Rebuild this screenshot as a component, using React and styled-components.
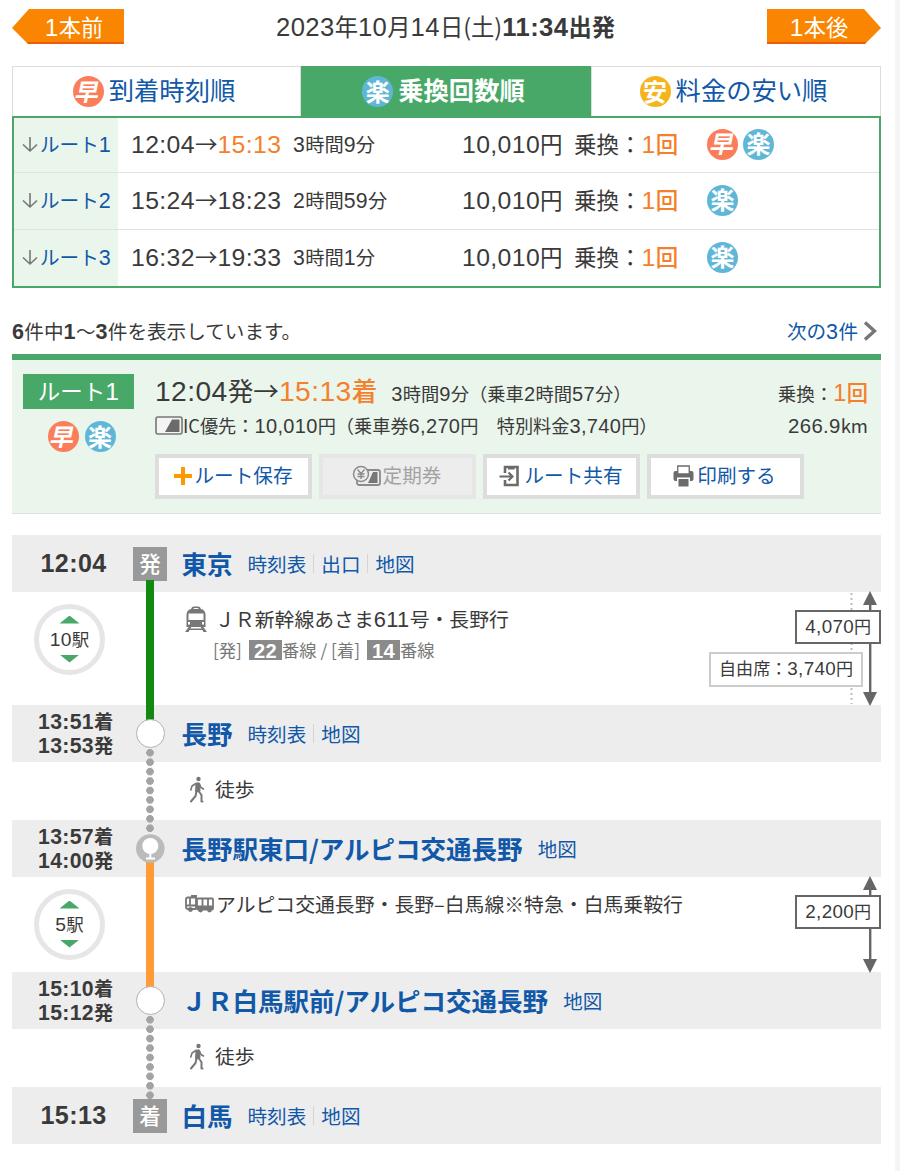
import styled, { createGlobalStyle, css } from 'styled-components'

const GlobalStyle = createGlobalStyle`
    * { box-sizing: border-box; }
    body {
        margin: 0;
        background: #fff;
        color: #3a3a3a;
        font-family: "Noto Sans CJK JP", sans-serif;
        font-size: 19.6px;
        line-height: 1;
    }
    a { color: #1158a8; text-decoration: none; }
`

const Page = styled.div`
    width: 900px;
    height: 1171px;
    padding: 9px 14px 0 12px;
    border-right: 5px solid #f5f5f5;
    overflow: hidden;
`

const Digits = styled.span`
    font-family: "Liberation Sans", sans-serif;
    font-size: 1.1em;
    line-height: 0;
    letter-spacing: 0.016em;
`

// digits are set in a wider latin face than the kanji around them
const Txt = ({ children }) =>
    children.split(/([0-9:,.]+)/).map((part, i) => (i % 2 ? <Digits key={i}>{part}</Digits> : part))

/* ---------- header ---------- */

const Header = styled.header`
    display: flex;
    justify-content: space-between;
    width: 869px;
    height: 57px;
`

const StepButton = styled.a`
    display: flex;
    align-items: center;
    justify-content: center;
    width: ${props => (props.$dir === 'prev' ? 112 : 114)}px;
    height: 35px;
    padding-bottom: 1px;
    color: #fff;
    font-size: 22.2px;
    background: linear-gradient(#f98500 33.5px, #ee5a10 33.5px);
    ${props => props.$dir === 'prev' ? css`
        padding-left: 12px;
        clip-path: polygon(0 19px, 17px 0, 100% 0, 100% 100%, 16px 100%);
    ` : css`
        padding-right: 10px;
        clip-path: polygon(0 0, 97px 0, 100% 19px, 98px 100%, 0 100%);
    `}
`

const HeaderDate = styled.div`
    padding-top: 4px;
    font-size: 23.3px;
    line-height: 26px;
    white-space: nowrap;
`

/* ---------- tabs + route list ---------- */

const Badge = styled.span`
    display: inline-flex;
    align-items: center;
    justify-content: center;
    flex: none;
    width: 31px;
    height: 31px;
    border-radius: 50%;
    color: #fff;
    font-size: 24px;
    font-weight: 700;
    background: ${props => props.$color};

    span {
        margin-top: -2px;
        transform: ${props => (props.$slant ? 'skewX(-12deg)' : 'none')};
    }
`

const badgeKinds = {
    fast: { text: '早', color: '#fb7e5b', slant: true },
    easy: { text: '楽', color: '#5fb7d8' },
    cheap: { text: '安', color: '#f4b41d' },
}

const KindBadge = ({ kind }) => {
    const { text, color, slant } = badgeKinds[kind]
    return <Badge $color={color} $slant={slant}><span>{text}</span></Badge>
}

const Tabs = styled.nav`
    display: grid;
    grid-template-columns: 289px 290px 290px;
    width: 869px;
    height: 50px;
`

const Tab = styled.a`
    display: flex;
    align-items: center;
    justify-content: center;
    gap: 5px;
    padding-right: 5px;
    font-size: 25.3px;
    border: 1px solid #ddd;
    border-bottom: 0;
    ${props => props.$active && css`
        color: #fff;
        font-weight: 700;
        background: #48a868;
        border-color: #48a868;
    `}
`

const TabText = styled.span`
    padding-bottom: 3px;
`

const RouteList = styled.div`
    width: 869px;
    height: 172px;
    border: 2px solid #4aa76a;
`

const RouteRow = styled.div`
    display: grid;
    grid-template-columns: 104px 13px 162px 169px 112px 133px auto;
    align-items: center;
    height: ${props => (props.$first ? 54 : 57)}px;
    border-top: ${props => (props.$first ? 0 : 1)}px solid #e2e2e2;
    font-size: 22.5px;
    white-space: nowrap;

    & > :first-child { grid-column: 1; }
    & > :nth-child(2) { grid-column: 3; }
    & > :last-child { padding-bottom: 2px; }
`

const RowText = styled.span`
    padding-bottom: 3px;
`

const RouteLink = styled.a`
    display: flex;
    align-items: center;
    align-self: stretch;
    gap: 1px;
    padding: 0 0 2px 7px;
    font-size: 19.6px;
    background: #eaf5ec;
`

const Hot = styled.span`
    color: #f5802b;
    font-weight: ${props => props.$weight || 400};
    font-size: ${props => props.$size || 1}em;
`

const Duration = styled.span`
    font-size: 19.3px;
`

const DetailDuration = styled.span`
    margin-left: 14px;
    font-size: 18.27px;
`

const Badges = styled.div`
    display: flex;
    gap: ${props => props.$gap || 5}px;
`

const ArrowDown = () => (
    <svg width="18" height="18" viewBox="0 0 18 18" fill="none" stroke="#777" strokeWidth="1.6">
        <path d="M9 2V16M2 9.5L9 16L16 9.5" />
    </svg>
)

const routes = [
    { no: 1, dep: '12:04', arr: '15:13', hot: true, time: '3時間9分', kinds: ['fast', 'easy'] },
    { no: 2, dep: '15:24', arr: '18:23', time: '2時間59分', kinds: ['easy'] },
    { no: 3, dep: '16:32', arr: '19:33', time: '3時間1分', kinds: ['easy'] },
]

/* ---------- paging ---------- */

const Paging = styled.div`
    display: flex;
    align-items: center;
    justify-content: space-between;
    width: 869px;
    height: 66px;
    padding: 20px 4px 0 0;
    font-size: 19.6px;
`

const NextLink = styled.a`
    display: flex;
    align-items: center;
    gap: 4px;
`

/* ---------- route detail ---------- */

const Detail = styled.section`
    display: grid;
    grid-template-columns: 143px 1fr;
    width: 869px;
    height: 160px;
    background: #eaf5ec;
    border-top: 6px solid #4aa76a;
    border-bottom: 1px solid #dbe3dc;
`

const DetailSide = styled.div`
    display: flex;
    flex-direction: column;
    align-items: center;
    gap: 12px;
    width: 133px;
    padding-top: 14px;

    ${Badges} { margin-left: 6px; }
`

const RouteLabel = styled.div`
    display: flex;
    align-items: center;
    justify-content: center;
    width: 111px;
    height: 35px;
    padding-bottom: 2px;
    color: #fff;
    font-size: 22.5px;
    background: #48a868;
`

const DetailMain = styled.div`
    padding: 13px 13px 0 0;
`

const DetailLine = styled.div`
    display: flex;
    align-items: ${props => (props.$baseline ? 'baseline' : 'center')};
    height: ${props => props.$h}px;
    line-height: ${props => props.$h}px;
    font-size: ${props => props.$size}px;
    white-space: nowrap;
`

const LineEnd = styled.span`
    margin-left: auto;
    font-size: 18.5px;
`

const Actions = styled.div`
    display: grid;
    grid-template-columns: repeat(4, 157px);
    gap: 7px;
    margin-top: 10px;
`

const ActionButton = styled.button`
    display: flex;
    align-items: center;
    justify-content: center;
    gap: ${props => props.$gap || 2}px;
    height: 45px;
    padding: 0 2px 1px 0;
    border: 4px solid #ddd;
    background: #fff;
    color: #1158a8;
    font: inherit;
    line-height: 1;

    span { padding-bottom: 2px; }

    ${props => props.disabled && css`
        border-color: #e6e6e6;
        background: #ededed;
        color: #a3a3a3;
    `}
`

const CardIcon = () => (
    <svg width="28" height="19" viewBox="0 0 28 19">
        <rect x="1" y="1" width="26" height="17" rx="2" fill="#f3f5f3" stroke="#777" strokeWidth="1.6" />
        <path d="M10 16L17 3.500H24.500V16Z" fill="#6b6b6b" />
    </svg>
)

const PlusIcon = () => (
    <svg width="20" height="20" viewBox="0 0 20 20" fill="#f90">
        <path d="M8 1H12V8H19V12H12V19H8V12H1V8H8Z" />
    </svg>
)

const PassIcon = () => (
    <svg width="29" height="22" viewBox="0 0 29 22" fill="none" stroke="#8b8b8b">
        <rect x="5" y="5" width="23" height="15" rx="2" strokeWidth="1.8" />
        <path d="M16 18L21 7H25.500V18Z" fill="#777" stroke="none" />
        <circle cx="9" cy="9" r="7.500" fill="#ededed" strokeWidth="1.5" />
        <path d="M5.500 4.500L9 8.500L12.500 4.500M9 8.500V14M5.500 9H12.500M5.500 11.500H12.500" strokeWidth="1.4" />
    </svg>
)

const ShareIcon = () => (
    <svg width="21" height="22" viewBox="0 0 21 22" fill="none" stroke="#6b6b6b">
        <path d="M6 8V2H18.500V20H6V15" strokeWidth="2.600" />
        <path d="M9 3H15.500" strokeWidth="3" />
        <path d="M0.500 11.500H13M9.500 7.500L13.500 11.500L9.500 15.500" strokeWidth="2.200" />
    </svg>
)

const PrintIcon = () => (
    <svg width="21" height="22" viewBox="0 0 21 22" fill="#6b6b6b">
        <path d="M2.500 6H18.500Q20.500 6 20.500 8V14Q20.500 16 18.500 16H2.500Q0.500 16 0.500 14V8Q0.500 6 2.500 6Z" />
        <path d="M4.750 1H16.250V9H4.750Z" fill="#fff" stroke="#6b6b6b" strokeWidth="1.300" />
        <rect x="4" y="12.500" width="13" height="4" fill="#fff" />
        <rect x="5.500" y="14" width="10" height="7.500" />
    </svg>
)

/* ---------- timeline ---------- */

const Timeline = styled.div`
    width: 869px;
    margin-top: 21px;
`

const Row = styled.div`
    display: grid;
    grid-template-columns: 120px 36px 1fr;
    height: ${props => props.$h}px;
`

const StationRow = styled(Row)`
    align-items: center;
    background: #ededed;
`

const Time = styled.div`
    padding-left: 28.500px;
    font-size: 22.8px;
    font-weight: 700;
`

const TimePair = styled(Time)`
    padding: 0 0 2px 26px;
    font-size: 19.3px;
    line-height: 24px;
    white-space: nowrap;
`

const EndNode = styled.div`
    display: flex;
    align-items: center;
    justify-content: center;
    width: 34px;
    height: 34px;
    margin-left: 1px;
    padding-bottom: 2px;
    color: #fff;
    font-size: 21.5px;
    font-weight: 500;
    background: #999;
`

const StopNode = styled.div`
    position: relative;
    z-index: 2;
    width: 29px;
    height: 29px;
    margin-left: 3.500px;
    border: 1.500px solid #b0b0b0;
    border-radius: 50%;
    background: #fff;
`

const PinIcon = styled.svg`
    position: relative;
    z-index: 2;
`

const PinNode = () => (
    <PinIcon width="36" height="30" viewBox="0 0 36 30">
        <circle cx="18.300" cy="14.500" r="14.300" fill="#bbb" />
        <circle cx="18.300" cy="12" r="8" fill="#fff" />
        <path d="M18.300 19V24M14 24.500H23" stroke="#fff" strokeWidth="2" />
    </PinIcon>
)

const Track = styled.div`
    position: relative;
    z-index: 1;
    width: 8px;
    margin: -${props => props.$up}px 0 -${props => props.$down}px 14px;
    background: ${props => props.$color};
`

const WalkTrack = styled(Track)`
    background: radial-gradient(circle closest-side, #a3a3a3 88%, transparent 100%) 0 0 / 8px 9.440px;
`

const Station = styled.div`
    display: flex;
    align-items: center;
    padding-left: 13.500px;
    white-space: nowrap;
`

const StationName = styled.a`
    margin-right: 15px;
    padding-bottom: 1px;
    font-size: 25.5px;
    font-weight: 700;
`

const StationLink = styled.a`
    font-size: 19.6px;

    & + & {
        margin-left: 7px;
        padding-left: 7px;
        border-left: 1px solid #d5d5d5;
    }
`

const Leg = styled.div`
    display: flex;
    justify-content: space-between;
    padding-left: 17px;
`

const LegInfo = styled.div`
    padding-top: ${props => props.$top}px;
    white-space: nowrap;
`

const LegTitle = styled.div`
    display: flex;
    align-items: center;
    gap: ${props => props.$gap || 0}px;
    height: 26px;
    font-size: 19.850px;
`

const Platforms = styled.div`
    display: flex;
    align-items: center;
    margin-top: 8px;
    padding-left: 28px;
    color: #777;
    font-size: 17.3px;
`

const PlatformNo = styled.span`
    width: 33px;
    height: 20px;
    margin-left: 7px;
    color: #fff;
    font-size: 18.300px;
    font-weight: 700;
    line-height: 20px;
    text-align: center;
    background: #8a8a8a;
`

const StopsButton = styled.button`
    display: flex;
    flex-direction: column;
    align-items: center;
    justify-content: space-between;
    width: 71px;
    height: 71px;
    margin: 12px 0 0 22px;
    padding: 6.500px 0 7.500px;
    border: 5.500px solid #e6e6e6;
    border-radius: 50%;
    background: #fff;
    color: #3a3a3a;
    font: inherit;
    font-size: 17.500px;
    line-height: 20px;
`

const Triangle = styled.i`
    width: 20px;
    height: 8px;
    background: #48a868;
    clip-path: ${props => (props.$up ? 'polygon(50% 0, 100% 100%, 0 100%)' : 'polygon(0 0, 100% 0, 50% 100%)')};
`

const Fares = styled.div`
    position: relative;
    display: flex;
    flex-direction: column;
    align-items: flex-end;
    gap: 8px;
    width: 180px;
    padding-top: 18px;
`

const FareArrow = styled.svg`
    position: absolute;
    top: -2px;
    right: 0;
`

const Fare = styled.div`
    position: relative;
    height: ${props => (props.$sub ? 35 : 34)}px;
    margin-right: ${props => (props.$sub ? 18 : 0)}px;
    padding: 0 8px;
    border: 2px solid ${props => (props.$sub ? '#ccc' : '#666')};
    background: #fff;
    font-size: 17.1px;
    line-height: 28px;
    white-space: nowrap;
`

const FareScale = ({ h, dotted }) => (
    <FareArrow width="40" height={h + 4} fill="#666">
        {dotted && <path d={`M10.500 3V${h + 1}`} stroke="#bbb" strokeWidth="2" strokeDasharray="2 3" />}
        <rect x="28" y="10" width="2.400" height={h - 10} />
        <path d={`M29 1L36 15H22ZM29 ${h + 3}L22 ${h - 11}H36Z`} />
    </FareArrow>
)

const TrainIcon = () => (
    <svg width="22" height="27" viewBox="0 0 22 27" fill="#777">
        <path d="M6 3.500Q6.500 0.500 9 0.500H13Q15.500 0.500 16 3.500H14Q13.500 2 12.500 2H9.500Q8.500 2 8 3.500Z" />
        <path d="M1.500 21V8Q2.500 3 7 3H15Q19.500 3 20.500 8V21Z" />
        <path d="M3.500 7.500H18.500V14H3.500Z" fill="#fff" />
        <path d="M3 16H5V18.500H3ZM19 16H17V18.500H19Z" fill="#fff" />
        <path d="M4 20.500H6.500L3.500 26H0ZM18 20.500H15.500L18.500 26H22Z" />
        <path d="M4 22.500H18V24H4Z" />
    </svg>
)

const BusIcon = () => (
    <svg width="29" height="18" viewBox="0 0 29 18" fill="none" stroke="#777" strokeWidth="1.800">
        <path d="M11 14H3Q1 14 1 12V4.500Q1 2.500 3 2.500H11V14M6 1H12M1 10.500H11M5 3V10" />
        <rect x="12" y="3.500" width="16" height="11" rx="1" />
        <path d="M17.500 4V11M23 4V11" />
        <path d="M12 10.500H28V14.500H12Z" fill="#777" stroke="none" />
        <circle cx="5.500" cy="14.500" r="1.500" fill="#777" />
        <circle cx="15.500" cy="15" r="1.500" fill="#777" />
        <circle cx="24.500" cy="15" r="1.500" fill="#777" />
    </svg>
)

const WalkIcon = () => (
    <svg width="16" height="27" viewBox="0 0 16 27" fill="none" stroke="#777" strokeLinecap="round" strokeLinejoin="round">
        <circle cx="9.500" cy="3" r="2.200" fill="#777" stroke="none" />
        <path d="M7.500 7.500H10L10.500 14.500L7 15.500Z" fill="#777" strokeWidth="2" />
        <path d="M7 7.500L3 10L1.800 14M10.500 8L12 11.500L14.500 13" strokeWidth="1.600" />
        <path d="M7.500 15.500L6.500 20L2 25.500M9.500 15L12.500 19V25.500H13.500" strokeWidth="2" />
    </svg>
)

const WalkTitle = styled(LegTitle)`
    padding-left: 4px;
`

const StationBlock = ({ name, links }) => (
    <Station>
        <StationName>{name}</StationName>
        {links.map(l => <StationLink key={l}>{l}</StationLink>)}
    </Station>
)

const Stops = ({ count }) => (
    <StopsButton>
        <Triangle $up />
        <span><Txt>{`${count}駅`}</Txt></span>
        <Triangle />
    </StopsButton>
)

const WalkRow = () => (
    <Row $h={58}>
        <span />
        <WalkTrack $up={14.5} $down={12.5} />
        <Leg>
            <LegInfo $top={14}>
                <WalkTitle $gap={10}><WalkIcon />徒歩</WalkTitle>
            </LegInfo>
        </Leg>
    </Row>
)

const ArriveDepart = ({ arr, dep }) => (
    <TimePair>
        <div><Txt>{`${arr}着`}</Txt></div>
        <div><Txt>{`${dep}発`}</Txt></div>
    </TimePair>
)

export default function App() {
    return (
        <Page>
            <GlobalStyle />
            <Header>
                <StepButton $dir="prev"><span><Txt>1本前</Txt></span></StepButton>
                <HeaderDate><Txt>2023年10月14日(土)</Txt><b><Txt>11:34出発</Txt></b></HeaderDate>
                <StepButton $dir="next"><span><Txt>1本後</Txt></span></StepButton>
            </Header>

            <Tabs>
                <Tab><KindBadge kind="fast" /><TabText>到着時刻順</TabText></Tab>
                <Tab $active><KindBadge kind="easy" /><TabText>乗換回数順</TabText></Tab>
                <Tab><KindBadge kind="cheap" /><TabText>料金の安い順</TabText></Tab>
            </Tabs>
            <RouteList>
                {routes.map(r => (
                    <RouteRow key={r.no} $first={r.no === 1}>
                        <RouteLink><ArrowDown /><span><Txt>{`ルート${r.no}`}</Txt></span></RouteLink>
                        <RowText>
                            <Txt>{`${r.dep}→`}</Txt>
                            {r.hot ? <Hot><Txt>{r.arr}</Txt></Hot> : <Txt>{r.arr}</Txt>}
                        </RowText>
                        <Duration><Txt>{r.time}</Txt></Duration>
                        <RowText><Txt>10,010円</Txt></RowText>
                        <RowText>乗換：<Hot $weight={500}><Txt>1回</Txt></Hot></RowText>
                        <Badges>{r.kinds.map(k => <KindBadge key={k} kind={k} />)}</Badges>
                    </RouteRow>
                ))}
            </RouteList>

            <Paging>
                <span><b><Txt>6</Txt></b>件中<b><Txt>1</Txt></b>～<b><Txt>3</Txt></b>件を表示しています。</span>
                <NextLink>
                    <span><Txt>次の3件</Txt></span>
                    <svg width="15" height="20" viewBox="0 0 15 20" fill="none" stroke="#777" strokeWidth="3.500">
                        <path d="M3 1.500L12.500 10L3 18.500" />
                    </svg>
                </NextLink>
            </Paging>

            <Detail>
                <DetailSide>
                    <RouteLabel><span><Txt>ルート1</Txt></span></RouteLabel>
                    <Badges $gap={6}><KindBadge kind="fast" /><KindBadge kind="easy" /></Badges>
                </DetailSide>
                <DetailMain>
                    <DetailLine $h={34} $size={25.600} $baseline>
                        <span><Txt>12:04発→</Txt><Hot $weight={500}><Txt>15:13着</Txt></Hot></span>
                        <DetailDuration><Txt>3時間9分（乗車2時間57分）</Txt></DetailDuration>
                        <LineEnd>乗換：<Hot $weight={500} $size={1.15}><Txt>1回</Txt></Hot></LineEnd>
                    </DetailLine>
                    <DetailLine $h={37} $size={18.2}>
                        <CardIcon />
                        <span>IC優先：<Txt>10,010円（乗車券6,270円　特別料金3,740円）</Txt></span>
                        <LineEnd><Txt>266.9</Txt>km</LineEnd>
                    </DetailLine>
                    <Actions>
                        <ActionButton><PlusIcon /><span>ルート保存</span></ActionButton>
                        <ActionButton disabled><PassIcon /><span>定期券</span></ActionButton>
                        <ActionButton $gap={5}><ShareIcon /><span>ルート共有</span></ActionButton>
                        <ActionButton $gap={3}><PrintIcon /><span>印刷する</span></ActionButton>
                    </Actions>
                </DetailMain>
            </Detail>

            <Timeline>
                <StationRow $h={57}>
                    <Time><Txt>12:04</Txt></Time>
                    <EndNode>発</EndNode>
                    <StationBlock name="東京" links={['時刻表', '出口', '地図']} />
                </StationRow>
                <Row $h={113}>
                    <Stops count={10} />
                    <Track $up={12} $down={16} $color="#128a12" />
                    <Leg>
                        <LegInfo $top={14}>
                            <LegTitle $gap={8}><TrainIcon /><span><Txt>ＪＲ新幹線あさま611号・長野行</Txt></span></LegTitle>
                            <Platforms>
                                [発]<PlatformNo><Txt>22</Txt></PlatformNo>番線 / [着]<PlatformNo><Txt>14</Txt></PlatformNo>番線
                            </Platforms>
                        </LegInfo>
                        <Fares>
                            <FareScale h={113} dotted />
                            <Fare><Txt>4,070円</Txt></Fare>
                            <Fare $sub><Txt>自由席：3,740円</Txt></Fare>
                        </Fares>
                    </Leg>
                </Row>
                <StationRow $h={57}>
                    <ArriveDepart arr="13:51" dep="13:53" />
                    <StopNode />
                    <StationBlock name="長野" links={['時刻表', '地図']} />
                </StationRow>
                <WalkRow />
                <StationRow $h={57}>
                    <ArriveDepart arr="13:57" dep="14:00" />
                    <PinNode />
                    <StationBlock name="長野駅東口/アルピコ交通長野" links={['地図']} />
                </StationRow>
                <Row $h={95}>
                    <Stops count={5} />
                    <Track $up={15} $down={16} $color="#ff9c38" />
                    <Leg>
                        <LegInfo $top={14}>
                            <LegTitle $gap={2}><BusIcon />アルピコ交通長野・長野–白馬線※特急・白馬乗鞍行</LegTitle>
                        </LegInfo>
                        <Fares>
                            <FareScale h={95} />
                            <Fare><Txt>2,200円</Txt></Fare>
                        </Fares>
                    </Leg>
                </Row>
                <StationRow $h={57}>
                    <ArriveDepart arr="15:10" dep="15:12" />
                    <StopNode />
                    <StationBlock name="ＪＲ白馬駅前/アルピコ交通長野" links={['地図']} />
                </StationRow>
                <WalkRow />
                <StationRow $h={57}>
                    <Time><Txt>15:13</Txt></Time>
                    <EndNode>着</EndNode>
                    <StationBlock name="白馬" links={['時刻表', '地図']} />
                </StationRow>
            </Timeline>
        </Page>
    )
}
